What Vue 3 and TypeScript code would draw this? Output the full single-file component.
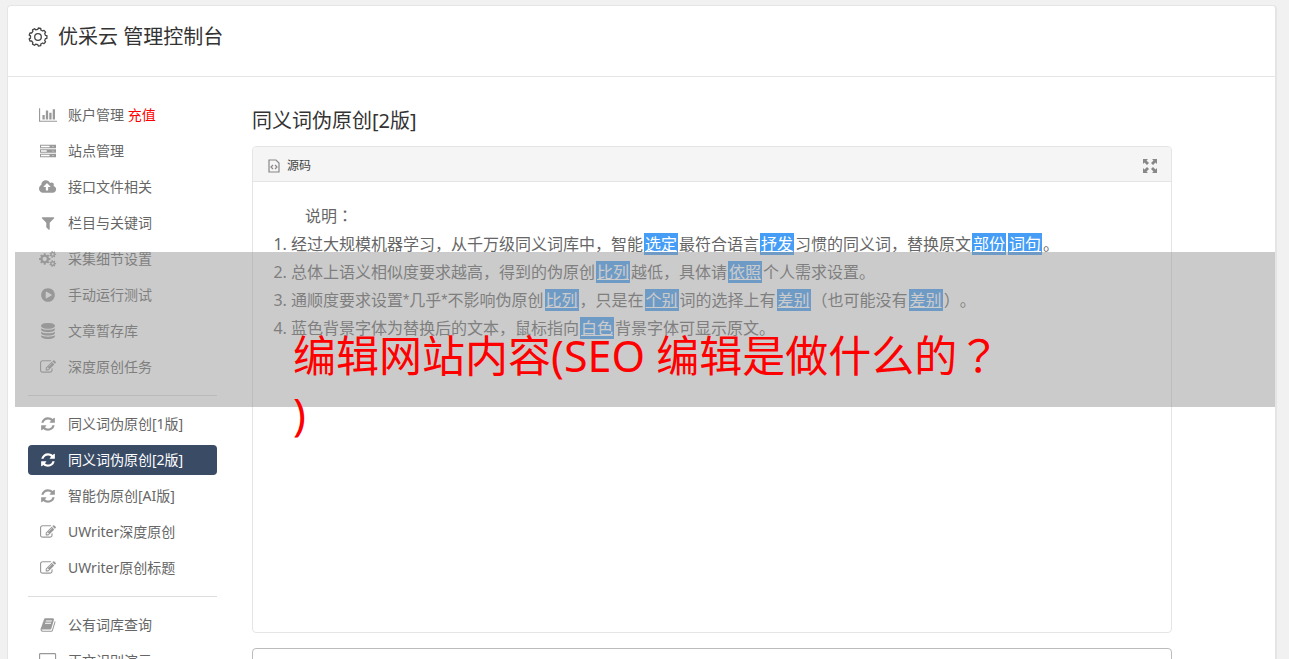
<script setup lang="ts">
import { ref } from 'vue'

interface Shape {
  box: string
  paths: string[]
}

interface MenuItem {
  icon: string
  label: string
  extra?: string
  active?: boolean
}

interface Piece {
  text: string
  kind: 'plain' | 'mark' | 'star'
}

// Closed outline of a toothed wheel centred on (cx, cy), with a round hole
function gear(cx: number, cy: number, outer: number, inner: number, hole: number, teeth: number): string {
  const points: string[] = []
  const step = (Math.PI * 2) / teeth
  const at = (r: number, a: number) => `${(cx + r * Math.cos(a)).toFixed(1)} ${(cy + r * Math.sin(a)).toFixed(1)}`
  for (let i = 0; i < teeth; i++) {
    const a = i * step
    points.push(at(inner, a - step * 0.3), at(outer, a - step * 0.2), at(outer, a + step * 0.2), at(inner, a + step * 0.3))
  }
  const ring = hole
    ? `M${cx - hole} ${cy}a${hole} ${hole} 0 1 0 ${hole * 2} 0a${hole} ${hole} 0 1 0 ${-hole * 2} 0z`
    : ''
  return `M${points.join('L')}z${ring}`
}

const square = '0 0 1792 1792'
const icons: Record<string, Shape> = {
  chart: {
    box: '0 0 2048 1792',
    paths: ['M640 896v512h-256v-512h256zm384-512v1024h-256v-1024h256zm1024 1152v128h-2048v-1536h128v1408h1920zm-640-896v768h-256v-768h256zm384-384v1152h-256v-1152h256z'],
  },
  server: {
    box: square,
    paths: [
      'M0 192h1792v384H0zM112 304v160h960v-160zM1400 384a56 56 0 1 0 112 0a56 56 0 1 0-112 0z',
      'M0 704h1792v384H0zM112 816v160h640v-160zM1400 896a56 56 0 1 0 112 0a56 56 0 1 0-112 0z',
      'M0 1216h1792v384H0zM112 1328v160h960v-160zM1400 1408a56 56 0 1 0 112 0a56 56 0 1 0-112 0z',
    ],
  },
  cloud: {
    box: '0 0 1920 1792',
    paths: ['M1280 864q0-14-9-23l-352-352q-9-9-23-9t-23 9l-351 351q-10 12-10 24 0 14 9 23t23 9h224v352q0 13 9.5 22.5t22.5 9.5h192q13 0 22.5-9.5t9.5-22.5v-352h224q13 0 22.5-9.5t9.5-22.5zm640 288q0 159-112.5 271.5t-271.5 112.5h-1088q-185 0-316.5-131.5t-131.5-316.5q0-130 70-240t188-165q-2-30-2-43 0-212 150-362t362-150q156 0 285.5 87t188.5 231q71-62 166-62 106 0 181 75t75 181q0 76-41 138 130 31 213.5 135.5t83.5 238.5z'],
  },
  filter: {
    box: square,
    paths: ['M1595 295q17 41-14 70l-493 493v742q0 42-39 59-13 5-25 5-27 0-45-19l-256-256q-19-19-19-45v-486l-493-493q-31-29-14-70 17-39 59-39h1280q42 0 59 39z'],
  },
  cogs: {
    box: '0 0 1920 1792',
    paths: [
      gear(640, 896, 640, 490, 240, 8),
      gear(1536, 384, 390, 270, 120, 7),
      gear(1536, 1408, 390, 270, 120, 7),
    ],
  },
  play: {
    box: square,
    paths: ['M896 128q209 0 385.5 103t279.5 279.5 103 385.5-103 385.5-279.5 279.5-385.5 103-385.5-103-279.5-279.5-103-385.5 103-385.5 279.5-279.5 385.5-103zm384 823q32-18 32-55t-32-55l-544-320q-31-19-64-1-32 19-32 56v640q0 37 32 56 16 8 32 8 17 0 32-9z'],
  },
  database: {
    box: square,
    paths: ['M896 768q237 0 443-43t325-127v170q0 69-103 128t-280 93.5-385 34.5-385-34.5-280-93.5-103-128v-170q119 84 325 127t443 43zm0 768q237 0 443-43t325-127v170q0 69-103 128t-280 93.5-385 34.5-385-34.5-280-93.5-103-128v-170q119 84 325 127t443 43zm0-384q237 0 443-43t325-127v170q0 69-103 128t-280 93.5-385 34.5-385-34.5-280-93.5-103-128v-170q119 84 325 127t443 43zm0-1152q208 0 385 34.5t280 93.5 103 128v128q0 69-103 128t-280 93.5-385 34.5-385-34.5-280-93.5-103-128v-128q0-69 103-128t280-93.5 385-34.5z'],
  },
  edit: {
    box: square,
    paths: ['M888 1184l116-116-152-152-116 116v56h96v96h56zm440-720q-16-16-33 1l-350 350q-17 17-1 33t33-1l350-350q17-17 1-33zm80 594v190q0 119-84.5 203.5t-203.5 84.5h-832q-119 0-203.5-84.5t-84.5-203.5v-832q0-119 84.5-203.5t203.5-84.5h832q63 0 117 25 15 7 18 23 3 17-9 29l-49 49q-14 14-32 8-23-6-45-6h-832q-66 0-113 47t-47 113v832q0 66 47 113t113 47h832q66 0 113-47t47-113v-126q0-13 9-22l64-64q15-15 35-7t20 29zm-96-738l288 288-672 672h-288v-288zm444 132l-92 92-288-288 92-92q28-28 68-28t68 28l152 152q28 28 28 68t-28 68z'],
  },
  refresh: {
    box: square,
    paths: ['M1639 1056q0 5-1 7-64 268-268 434.5t-478 166.5q-146 0-282.5-55t-243.5-157l-129 129q-19 19-45 19t-45-19-19-45v-448q0-26 19-45t45-19h448q26 0 45 19t19 45-19 45l-137 137q71 66 161 102t187 36q134 0 250-65t186-179q11-17 53-117 8-23 30-23h192q13 0 22.5 9.5t9.5 22.5zm25-800v448q0 26-19 45t-45 19h-448q-26 0-45-19t-19-45 19-45l138-138q-148-137-349-137-134 0-250 65t-186 179q-11 17-53 117-8 23-30 23h-199q-13 0-22.5-9.5t-9.5-22.5v-7q65-268 270-434.5t480-166.5q146 0 284 55.5t245 156.5l130-129q19-19 45-19t45 19 19 45z'],
  },
  book: {
    box: square,
    paths: ['M1703 478q40 57 18 129l-275 906q-19 64-76.5 107.5t-122.5 43.5h-923q-77 0-148.5-53.5t-99.5-131.5q-24-67-2-127 0-4 3-27t4-37q1-8-3-21.5t-3-19.5q2-11 8-21t16.5-23.5 16.5-23.5q23-38 45-91.5t30-91.5q3-10 .5-30t-.5-28q3-11 17-28t17-23q21-36 42-92t25-90q1-9-2.5-32t.5-28q4-13 22-30.5t22-22.5q19-26 42.5-84.5t27.5-96.5q1-8-3-25.5t-2-26.5q2-8 9-18t18-23 17-21q8-12 16.5-30.5t15-35 16-36 19.5-32 26.5-23.5 36-11.5 47.5 5.5l-1 3q38-9 51-9h761q74 0 114 56t18 130l-274 906q-36 119-71.5 153.5t-128.5 34.5h-869q-27 0-38 15-11 16-1 43 24 70 144 70h923q29 0 56-15.5t35-41.5l300-987q7-22 5-57 38 15 59 43zm-1064 2q-4 13 2 22.5t20 9.5h608q13 0 25.5-9.5t16.5-22.5l21-64q4-13-2-22.5t-20-9.5h-608q-13 0-25.5 9.5t-16.5 22.5zm-83 256q-4 13 2 22.5t20 9.5h608q13 0 25.5-9.5t16.5-22.5l21-64q4-13-2-22.5t-20-9.5h-608q-13 0-25.5 9.5t-16.5 22.5z'],
  },
  desktop: {
    box: '0 0 1920 1792',
    paths: ['M160 0h1600q160 0 160 160v1088q0 160-160 160H160Q0 1408 0 1248V160Q0 0 160 0zM176 128q-48 0-48 48v1056q0 48 48 48h1568q48 0 48-48V176q0-48-48-48zM640 1500h640v192H640z'],
  },
}

const groups: MenuItem[][] = [
  [
    { icon: 'chart', label: '账户管理', extra: '充值' },
    { icon: 'server', label: '站点管理' },
    { icon: 'cloud', label: '接口文件相关' },
    { icon: 'filter', label: '栏目与关键词' },
    { icon: 'cogs', label: '采集细节设置' },
    { icon: 'play', label: '手动运行测试' },
    { icon: 'database', label: '文章暂存库' },
    { icon: 'edit', label: '深度原创任务' },
  ],
  [
    { icon: 'refresh', label: '同义词伪原创[1版]' },
    { icon: 'refresh', label: '同义词伪原创[2版]', active: true },
    { icon: 'refresh', label: '智能伪原创[AI版]' },
    { icon: 'edit', label: 'UWriter深度原创' },
    { icon: 'edit', label: 'UWriter原创标题' },
  ],
  [
    { icon: 'book', label: '公有词库查询' },
    { icon: 'desktop', label: '正文识别演示' },
  ],
]

// Words between braces are the replaced ones
function parse(line: string): Piece[] {
  return line
    .split(/(\{[^}]*\}|\*)/)
    .filter((s) => s.length > 0)
    .map((s): Piece => {
      if (s.startsWith('{')) return { text: s.slice(1, -1), kind: 'mark' }
      return { text: s, kind: s === '*' ? 'star' : 'plain' }
    })
}

const notes: Piece[][] = [
  '经过大规模机器学习，从千万级同义词库中，智能{选定}最符合语言{抒发}习惯的同义词，替换原文{部份}{词句}。',
  '总体上语义相似度要求越高，得到的伪原创{比列}越低，具体请{依照}个人需求设置。',
  '通顺度要求设置*几乎*不影响伪原创{比列}，只是在{个别}词的选择上有{差别}（也可能没有{差别}）。',
  '蓝色背景字体为替换后的文本，鼠标指向{白色}背景字体可显示原文。',
].map(parse)

const gearOutline = gear(10, 10, 9, 7.6, 0, 9)
const source = ref('')
</script>

<template>
  <div class="page">
    <div class="shell">
      <header class="top">
        <svg class="top-icon" viewBox="0 0 20 20" aria-hidden="true">
          <path :d="gearOutline" />
          <circle cx="10" cy="10" r="3.300" />
        </svg>
        <h1>优采云 管理控制台</h1>
      </header>

      <div class="columns">
        <nav class="side">
          <ul v-for="(group, g) in groups" :key="g" class="group">
            <li v-for="item in group" :key="item.label">
              <a href="#" class="item" :class="{ active: item.active }">
                <span class="icon-box">
                  <svg class="icon" :viewBox="icons[item.icon].box" aria-hidden="true">
                    <path v-for="(d, i) in icons[item.icon].paths" :key="i" :d="d" fill-rule="evenodd" />
                  </svg>
                </span>
                <span>{{ item.label }}<span v-if="item.extra" class="extra">&nbsp;{{ item.extra }}</span></span>
              </a>
            </li>
          </ul>
        </nav>

        <main class="main">
          <h2>同义词伪原创[2版]</h2>
          <section class="editor">
            <div class="toolbar">
              <button type="button" class="tool">
                <svg class="doc" viewBox="0 0 12 14" aria-hidden="true">
                  <path d="M1 1h7l3 3v9H1z" />
                  <path d="M5 6L3 8l2 2M7 6l2 2-2 2" />
                </svg>
                源码
              </button>
              <button type="button" class="tool" aria-label="全屏">
                <svg class="expand" viewBox="0 0 14 14" aria-hidden="true">
                  <path d="M0 0h5L3.500 1.500 6 4 4 6 1.500 3.500 0 5zM14 0v5l-1.500-1.500L10 6 8 4l2.500-2.500L9 0zM0 14V9l1.500 1.500L4 8l2 2-2.500 2.500L5 14zM14 14H9l1.500-1.500L8 10l2-2 2.500 2.500L14 9z" />
                </svg>
              </button>
            </div>
            <div class="text">
              <p>说明<span class="centred">：</span></p>
              <ol>
                <li v-for="(line, n) in notes" :key="n">
                  <template v-for="(piece, k) in line" :key="k"><a v-if="piece.kind === 'mark'" href="#" class="mark">{{ piece.text }}</a><span v-else :class="piece.kind">{{ piece.text }}</span></template>
                </li>
              </ol>
            </div>
          </section>
          <textarea v-model="source" class="source" aria-label="原文"></textarea>
        </main>
      </div>
    </div>

    <div class="banner">
      <p>编辑网站内容(SEO 编辑是做什么的<span class="centred">？</span><br />)</p>
    </div>
  </div>
</template>

<style>
body {
  margin: 0;
  background: #f1f1f1;
}
</style>

<style scoped>
* {
  box-sizing: border-box;
}

.page {
  position: relative;
  height: 100vh;
  overflow: hidden;
  padding: 5px 12px 0 7px;
  font-family: 'Noto Sans', 'Noto Sans CJK SC', sans-serif;
  text-spacing-trim: space-all;
  color: #666;
}

h1,
h2,
p,
ul,
ol {
  margin: 0;
  padding: 0;
}

h1,
h2 {
  font-size: 20px;
  line-height: 28px;
  font-weight: 400;
  color: #333;
}

.shell {
  background: #fff;
  border: 1px solid #e5e5e5;
  border-right-width: 2px;
  border-radius: 4px;
}

.top {
  display: flex;
  align-items: center;
  gap: 10px;
  height: 71px;
  padding: 0 20px 9px;
  border-bottom: 1px solid #e5e5e5;
}

.top-icon {
  width: 20px;
  height: 20px;
  fill: none;
  stroke: #444;
  stroke-width: 1.3;
  stroke-linejoin: round;
}

.columns {
  display: flex;
  gap: 35px;
  padding: 23px 103px 20px 20px;
}

.side {
  flex: 0 0 189px;
}

.group {
  display: flex;
  flex-direction: column;
  gap: 6px;
  list-style: none;
}

.group + .group {
  margin-top: 13px;
  padding-top: 13px;
  border-top: 1px solid #ddd;
}

.item {
  display: flex;
  align-items: center;
  gap: 10px;
  height: 30px;
  padding: 0 10px;
  border-radius: 4px;
  font-size: 14px;
  line-height: 20px;
  color: #666;
  text-decoration: none;
  white-space: nowrap;
}

.icon-box {
  display: flex;
  justify-content: center;
  width: 20px;
}

.icon {
  height: 16px;
  fill: #999;
}

.extra {
  color: #f00;
}

.active {
  background: #3a4b66;
  color: #fff;
}

.active .icon {
  fill: #fff;
}

.main {
  flex: 1;
  min-width: 0;
  padding-top: 7px;
}

.editor {
  height: 487px;
  margin: 11px 0 15px;
  border: 1px solid #e5e5e5;
  border-radius: 4px;
}

.toolbar {
  display: flex;
  align-items: center;
  justify-content: space-between;
  height: 35px;
  padding: 3px 14px 0 15px;
  background: #f5f5f5;
  border-bottom: 1px solid #e5e5e5;
  border-radius: 3px 3px 0 0;
}

.tool {
  display: flex;
  align-items: center;
  gap: 7px;
  padding: 0;
  border: 0;
  background: none;
  font: inherit;
  font-size: 12px;
  line-height: 20px;
  color: #444;
}

.doc {
  width: 12px;
  height: 14px;
  fill: none;
  stroke: #888;
  stroke-width: 1.2;
}

.expand {
  width: 14px;
  height: 14px;
  fill: #888;
}

.text {
  padding: 20px;
  font-size: 16px;
  line-height: 28px;
}

.text p {
  text-indent: 2em;
}

.text ol {
  padding-left: 18px;
}

.centred {
  font-family: 'Noto Sans CJK TC', sans-serif;
  line-height: 1;
}

.star {
  font-family: 'Liberation Sans', sans-serif;
  line-height: 1;
}

.mark {
  margin: 0 1px;
  padding: 0 1px;
  background: #459df5;
  color: #fff;
  text-decoration: underline;
}

.source {
  display: block;
  width: 100%;
  height: 200px;
  border: 1px solid #bbb;
  border-radius: 4px;
  background: #fff;
  resize: none;
}

.banner {
  position: absolute;
  top: 252px;
  left: 15px;
  right: 14px;
  height: 155px;
  padding: 75px 0 0 278px;
  background: rgba(151, 151, 151, 0.5);
  color: #f00;
  font-size: 43px;
  line-height: 58px;
}
</style>
